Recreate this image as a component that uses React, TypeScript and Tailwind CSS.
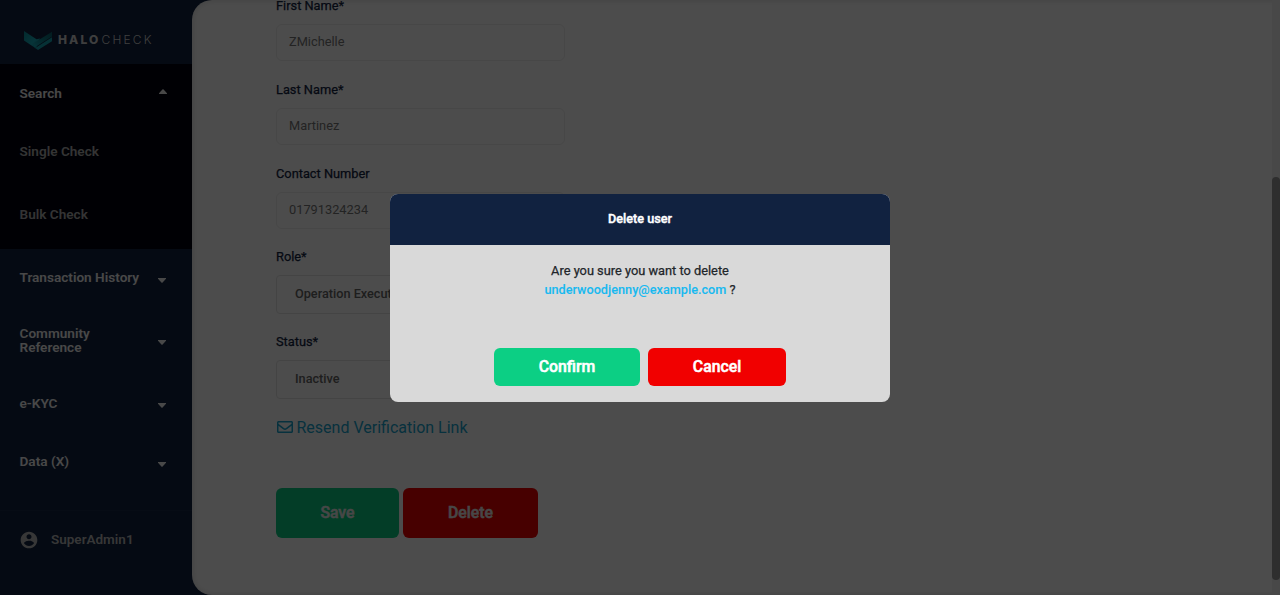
import type { ReactNode } from "react";

const buttonText = "text-[15.800px] font-medium [-webkit-text-stroke:0.5px_currentColor]";
const labelStroke = "[-webkit-text-stroke:0.25px_currentColor]";

function Caret({ up = false }: { up?: boolean }) {
  return (
    <svg width="8" height="5" viewBox="0 0 8 5" fill="currentColor" className="block">
      {up ? <path d="M0 4.2 3.4.5Q4 0 4.6.5L8 4.2V5H0Z" /> : <path d="M0 0H8V.8L4.6 4.5Q4 5 3.4 4.5L0 .8Z" />}
    </svg>
  );
}

function Logo() {
  return (
    <div className="flex h-16 items-start pl-6 pt-[31px]">
      <svg width="28" height="19" viewBox="0 0 28 19">
        <defs>
          <linearGradient id="wing" x1="0" y1="0" x2="1" y2="1">
            <stop offset="0" stopColor="#0a8c99" />
            <stop offset="0.6" stopColor="#18b0bf" />
            <stop offset="1" stopColor="#0b7884" />
          </linearGradient>
          <linearGradient id="fold" x1="0" y1="1" x2="1" y2="0">
            <stop offset="0" stopColor="#18b0bf" />
            <stop offset="0.5" stopColor="#0c7f8b" />
            <stop offset="1" stopColor="#0a5f6a" />
          </linearGradient>
        </defs>
        <path d="M0 0 12.500 8.300 16 7.500 12 17.500 0 9.500Z" fill="url(#wing)" />
        <path d="M9 12.500 28 .8V5.400L10.500 16.400Z" fill="url(#fold)" />
        <path d="M11.200 17 28 6.200V10.200L14 19Z" fill="#16a5b3" />
      </svg>
      <div className="ml-[6px] mt-[2px] flex text-[12px] leading-[14px] text-[#d0d0d0]">
        <span className="w-[43.500px] font-[Inter] font-extrabold tracking-[2.1px]">HALO</span>
        <span className="font-[Inter] font-light tracking-[2.2px]">CHECK</span>
      </div>
    </div>
  );
}

function MenuItem({ children, className, caret }: { children: ReactNode; className: string; caret?: ReactNode }) {
  return (
    <div className={`flex justify-between pl-[19.500px] pr-[26px] text-[13.600px] leading-[14px] text-[#f0f0f0] ${className}`}>
      <span className="-mt-px font-semibold">{children}</span>
      {caret}
    </div>
  );
}

function Sidebar() {
  return (
    <aside className="flex w-48 shrink-0 flex-col bg-[#112240]">
      <Logo />
      <div className="h-[185px] bg-[#000310]">
        <MenuItem className="h-[58px] pt-[23px]" caret={<span className="mr-[-0.500px] mt-[2px]"><Caret up /></span>}>Search</MenuItem>
        <MenuItem className="h-[63px] pt-[23px] text-[#b0b0b0]!">Single Check</MenuItem>
        <MenuItem className="h-[60px] pt-[23px] text-[#b0b0b0]!">Bulk Check</MenuItem>
      </div>
      <MenuItem className="h-[56px] pt-[22px]" caret={<span className="mt-[7px]"><Caret /></span>}>Transaction History</MenuItem>
      <MenuItem className="h-[70px] pt-[22px]" caret={<span className="mt-[13px]"><Caret /></span>}>Community<br />Reference</MenuItem>
      <MenuItem className="h-[58px] pt-[22px]" caret={<span className="mt-[6px]"><Caret /></span>}>e-KYC</MenuItem>
      <MenuItem className="h-[77px] pt-[22px]" caret={<span className="mt-[7px]"><Caret /></span>}>Data (X)</MenuItem>
      <div className="flex flex-1 items-start border-t border-[#192b49] pl-[19px] pt-[19px] text-[#b8b8b8]">
        <svg width="20" height="20" viewBox="0 0 24 24" fill="currentColor">
          <path d="M12 2C6.48 2 2 6.48 2 12s4.48 10 10 10 10-4.480 10-10S17.520 2 12 2zm0 3c1.660 0 3 1.340 3 3s-1.340 3-3 3-3-1.340-3-3 1.340-3 3-3zm0 14.200c-2.500 0-4.710-1.280-6-3.220.030-1.990 4-3.080 6-3.080 1.990 0 5.970 1.090 6 3.080-1.290 1.940-3.500 3.220-6 3.220z" />
        </svg>
        <span className="ml-3 mt-px text-[13.500px] font-semibold leading-4">SuperAdmin1</span>
      </div>
    </aside>
  );
}

function Field({ label, value, select = false, className }: { label: string; value: string; select?: boolean; className: string }) {
  return (
    <div className={className}>
      <div className={`h-[26px] text-[12.800px] leading-4 text-[#112240] ${labelStroke}`}>{label}</div>
      {select ? (
        <div className="flex h-[39px] w-[288.500px] items-center rounded-[4px] border border-[#e4e4e4] pb-px pl-[18px] text-[12.700px] font-medium text-[#666666]">{value}</div>
      ) : (
        <div className="flex h-[37px] w-[288.500px] items-center rounded-[6px] border border-[#eeeeee] pb-[2px] pl-3 text-[12.800px] text-[#777777]">{value}</div>
      )}
    </div>
  );
}

export default function App() {
  return (
    <div className="relative flex h-[595px] w-[1280px] overflow-hidden bg-[#112240] font-[Roboto,sans-serif]">
      <Sidebar />
      <main className="flex flex-1 justify-between overflow-hidden rounded-l-[20px] bg-white shadow-[inset_0_0_6px_rgba(0,0,0,0.16)]">
        <div className="pl-[84px]">
          <Field className="mt-[-2px] h-[84px]" label="First Name*" value="ZMichelle" />
          <Field className="h-[84px]" label="Last Name*" value="Martinez" />
          <Field className="h-[83px]" label="Contact Number" value="01791324234" />
          <Field className="h-[85px]" label="Role*" value="Operation Executive" select />
          <Field className="h-[84px]" label="Status*" value="Inactive" select />
          <div className="flex h-[70.400px] items-start text-[16px] leading-[19px] text-[#18a5cf]">
            <svg width="16" height="16" viewBox="0 0 512 512" fill="currentColor" className="ml-[0.500px] mr-[4px] mt-px">
              <path d="M464 64H48C21.490 64 0 85.490 0 112v288c0 26.510 21.490 48 48 48h416c26.510 0 48-21.490 48-48V112c0-26.510-21.490-48-48-48zm0 48v40.805c-22.422 18.259-58.168 46.651-134.587 106.490-16.841 13.247-50.201 45.072-73.413 44.701-23.208.375-56.579-31.459-73.413-44.701C106.180 199.465 70.425 171.067 48 152.805V112h416zM48 400V214.398c22.914 18.251 55.409 43.862 104.938 82.646 21.857 17.205 60.134 55.186 103.062 54.955 42.717.231 80.509-37.199 103.053-54.947 49.528-38.783 82.032-64.401 104.947-82.653V400H48z" />
            </svg>
            Resend Verification Link
          </div>
          <div className={`flex gap-1 text-[#eeeeee] ${buttonText}`}>
            <button className="h-[49.500px] w-[123px] rounded-[6px] bg-[#0ace82]">Save</button>
            <button className="h-[49.500px] w-[135px] rounded-[6px] bg-[#ef0000]">Delete</button>
          </div>
        </div>
        <div className="w-2 bg-[#f0f0f0] pt-[177px]">
          <div className="h-[403px] rounded-[4px] bg-[#999999]" />
        </div>
      </main>

      <div className="absolute inset-0 flex items-start justify-center bg-black/70 pt-[193.700px]">
        <div role="dialog" className="h-[208px] w-[500px] overflow-hidden rounded-[8px] bg-[#d9d9d9] text-center">
          <div className="flex h-[51px] items-center justify-center bg-[#112240] pb-px text-[12.700px] font-medium text-white [-webkit-text-stroke:0.4px_currentColor]">Delete user</div>
          <div className={`h-[103px] pt-4 text-[12.800px] leading-[19px] text-[#212529] ${labelStroke}`}>
            Are you sure you want to delete
            <br />
            <span className="text-[12.700px] font-medium text-[#18b9f0] [-webkit-text-stroke:0.1px_currentColor]">underwoodjenny@example.com</span> ?
          </div>
          <div className={`flex justify-center gap-2 text-white ${buttonText}`}>
            <button className="h-[38px] w-[146px] rounded-[6px] bg-[#0ccf84]">Confirm</button>
            <button className="h-[38px] w-[138px] rounded-[6px] bg-[#f10000]">Cancel</button>
          </div>
        </div>
      </div>
    </div>
  );
}
